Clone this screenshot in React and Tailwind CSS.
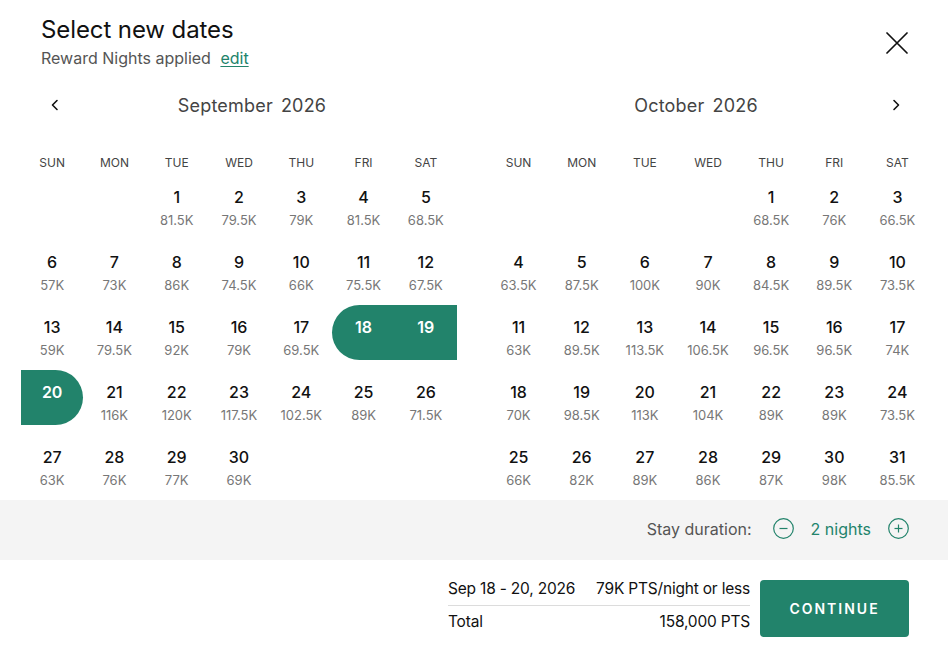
import React from 'react';

const GREEN = '#22836b';

const sep = {
  offset: 2,
  prices: ['81.5K','79.5K','79K','81.5K','68.5K','57K','73K','86K','74.5K','66K','75.5K','67.5K','59K','79.5K','92K','79K','69.5K','','','','116K','120K','117.5K','102.5K','89K','71.5K','63K','76K','77K','69K'],
};
const oct = {
  offset: 4,
  prices: ['68.5K','76K','66.5K','63.5K','87.5K','100K','90K','84.5K','89.5K','73.5K','63K','89.5K','113.5K','106.5K','96.5K','96.5K','74K','70K','98.5K','113K','104K','89K','89K','73.5K','66K','82K','89K','86K','87K','98K','85.5K'],
};

const days = ['SUN', 'MON', 'TUE', 'WED', 'THU', 'FRI', 'SAT'];

function Chevron({ dir }) {
  return (
    <svg width="14" height="14" viewBox="0 0 14 14" fill="none" stroke="#111" strokeWidth="1.6" strokeLinecap="round" strokeLinejoin="round">
      {dir === 'left' ? <path d="M9 2.5L4.5 7L9 11.5" /> : <path d="M5 2.5L9.5 7L5 11.5" />}
    </svg>
  );
}

function Cell({ day, price, sel }) {
  if (!day) return <div className="h-[55px]" />;
  const base = 'h-[55px] flex flex-col items-center pt-[12px]';
  let cls = base;
  if (sel === 'start') cls += ' bg-[#22836b] rounded-l-full';
  if (sel === 'mid') cls += ' bg-[#22836b]';
  if (sel === 'end') cls += ' bg-[#22836b] rounded-r-full';
  return (
    <div className={cls}>
      <span className={sel ? 'text-[16px] leading-[20px] font-semibold text-white' : 'text-[16px] leading-[20px] font-medium text-[#111]'}>{day}</span>
      {!sel && <span className="mt-[5px] text-[13px] leading-[16px] text-[#777]">{price}</span>}
    </div>
  );
}

function Month({ data, selMap }) {
  const cells = [];
  for (let i = 0; i < data.offset; i++) cells.push(<Cell key={'e' + i} />);
  data.prices.forEach((p, i) => {
    const d = i + 1;
    cells.push(<Cell key={d} day={d} price={p} sel={selMap[d]} />);
  });
  return (
    <div>
      <div className="grid grid-cols-7 mt-[38px] mb-[4px]">
        {days.map((d) => (
          <div key={d} className="text-center text-[12px] leading-[16px] text-[#444]">{d}</div>
        ))}
      </div>
      <div className="grid grid-cols-7 gap-y-[10px]">{cells}</div>
    </div>
  );
}

function CircleBtn({ plus }) {
  return (
    <svg width="21" height="21" viewBox="0 0 21 21" fill="none" stroke={GREEN} strokeWidth="1.2">
      <circle cx="10.5" cy="10.5" r="9.8" />
      <path d="M6.5 10.5h8" />
      {plus && <path d="M10.5 6.5v8" />}
    </svg>
  );
}

export default function App() {
  return (
    <div className="w-[948px] h-[657px] bg-white flex flex-col text-[#111]" style={{ fontFamily: 'Inter, "Noto Sans", sans-serif' }}>
      <div className="flex justify-between items-start pl-[41px] pr-[40px] pt-[16px]">
        <div>
          <h1 className="text-[24px] leading-[28px] text-[#111] tracking-[-0.1px]">Select new dates</h1>
          <p className="mt-[4px] text-[16px] leading-[20px] text-[#555]">
            Reward Nights applied <a className="ml-[5px] text-[#22836b] underline underline-offset-2">edit</a>
          </p>
        </div>
        <svg className="mt-[16px]" width="22" height="22" viewBox="0 0 22 22" stroke="#111" strokeWidth="1.7" strokeLinecap="round">
          <path d="M1 1L21 21M21 1L1 21" />
        </svg>
      </div>

      <div className="flex mt-[25px]">
        <div className="ml-[21px] w-[436px]">
          <div className="flex items-center h-[24px] pl-[27px]">
            <Chevron dir="left" />
            <div className="flex-1 text-center pr-[15px] text-[18px] text-[#444] tracking-[0.2px]">
              September<span className="ml-[8px]">2026</span>
            </div>
          </div>
          <Month data={sep} selMap={{ 18: 'start', 19: 'mid', 20: 'end' }} />
        </div>
        <div className="ml-[30px] w-[442px]">
          <div className="flex items-center h-[24px] pr-[26px]">
            <div className="flex-1 text-center pl-[16px] text-[18px] text-[#444] tracking-[0.2px]">
              October<span className="ml-[8px]">2026</span>
            </div>
            <Chevron dir="right" />
          </div>
          <Month data={oct} selMap={{}} />
        </div>
      </div>

      <div className="mt-[10px] h-[60px] bg-[#f4f4f4] flex items-center justify-end pr-[39px] pb-[3px]">
        <span className="text-[16px] text-[#555] mr-[21px]">Stay duration:</span>
        <CircleBtn />
        <span className="mx-[17px] text-[16px] text-[#22836b]">2 nights</span>
        <CircleBtn plus />
      </div>

      <div className="flex justify-end items-start pr-[39px] pt-[20px] gap-[10px]">
        <div className="w-[302px] mt-[-1px] text-[15.5px] leading-[20px] text-[#111] tracking-[-0.2px]">
          <div className="flex justify-between pb-[6px] border-b border-[#dcdcdc]">
            <span>Sep 18 - 20, 2026</span>
            <span>79K PTS/night or less</span>
          </div>
          <div className="flex justify-between pt-[6px]">
            <span>Total</span>
            <span>158,000 PTS</span>
          </div>
        </div>
        <button className="w-[149px] h-[57px] rounded-[4px] bg-[#22836b] text-white text-[14px] font-semibold tracking-[2px]">
          CONTINUE
        </button>
      </div>
    </div>
  );
}
